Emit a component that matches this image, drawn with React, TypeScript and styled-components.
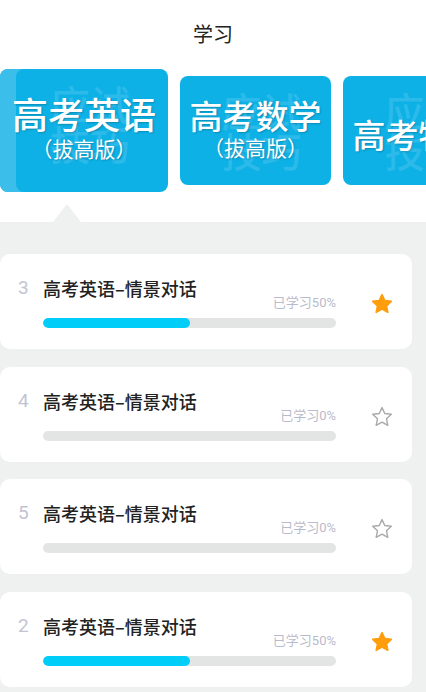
import React from 'react'
import styled, { createGlobalStyle } from 'styled-components'

const GlobalStyle = createGlobalStyle`
  html, body {
    margin: 0;
    padding: 0;
    background: #fff;
  }
  body {
    font-family: Roboto, "Noto Sans CJK SC", sans-serif;
  }
`

const Page = styled.div`
  width: 426px;
  min-height: 692px;
  background: #eff0f0;
  overflow: hidden;
`

const Top = styled.div`
  background: #fff;
`

const Header = styled.div`
  height: 66px;
  display: flex;
  align-items: center;
  justify-content: center;
  font-family: "Noto Sans CJK SC", sans-serif;
  font-size: 20px;
  font-weight: 400;
  color: #222;
`

const Tabs = styled.div`
  display: flex;
  align-items: center;
  gap: 12px;
  height: 123px;
  padding-top: 3px;
  overflow: hidden;
`

const Tab = styled.div<{ $active?: boolean; $sub?: boolean }>`
  position: relative;
  flex-shrink: 0;
  width: ${p => (p.$active ? '168px' : '151px')};
  height: ${p => (p.$active ? '123px' : '109px')};
  box-sizing: border-box;
  border-radius: 8px;
  background: #0db1e6;
  box-shadow: ${p => (p.$active ? 'inset 16px 0 0 #3cbeea' : 'none')};
  display: flex;
  flex-direction: column;
  align-items: center;
  justify-content: center;
  overflow: hidden;
  color: #fff;
  font-family: "Noto Sans CJK SC", sans-serif;
  padding-bottom: ${p => (p.$sub ? (p.$active ? '8px' : '5px') : '0')};
  padding-top: ${p => (p.$sub ? '0' : '7px')};
`

const Watermark = styled.div`
  position: absolute;
  top: 14px;
  left: calc(50% - 34px);
  width: 80px;
  font-size: 40px;
  line-height: 40px;
  color: rgba(255, 255, 255, 0.13);
  font-weight: 500;
`

const TabTitle = styled.div<{ $active?: boolean }>`
  position: relative;
  font-size: ${p => (p.$active ? '36px' : '33px')};
  line-height: ${p => (p.$active ? '40px' : '36px')};
  font-weight: 500;
  white-space: nowrap;
  text-shadow: 1px 1px 2px rgba(0, 0, 0, 0.22);
`

const TabSub = styled.div<{ $active?: boolean }>`
  position: relative;
  font-size: 21px;
  line-height: 24px;
  margin-top: ${p => (p.$active ? '3px' : '2px')};
  white-space: nowrap;
  text-shadow: 1px 1px 2px rgba(0, 0, 0, 0.22);
`

const PointerRow = styled.div`
  height: 30px;
  display: flex;
  align-items: flex-end;
  padding-left: 53px;
`

const Arrow = styled.div`
  width: 0;
  height: 0;
  border-left: 14px solid transparent;
  border-right: 14px solid transparent;
  border-bottom: 18px solid #eff0f0;
`

const List = styled.div`
  display: flex;
  flex-direction: column;
  gap: 17.6px;
  padding: 32px 14px 20px 0;
`

const Item = styled.div`
  height: 95px;
  background: #fff;
  border-radius: 10px;
  display: flex;
`

const Main = styled.div`
  width: 336px;
  padding-top: 24px;
  display: flex;
  flex-direction: column;
`

const TitleRow = styled.div`
  display: flex;
  align-items: center;
  height: 20px;
`

const Index = styled.div`
  width: 43px;
  box-sizing: border-box;
  padding-left: 18px;
  font-size: 19px;
  line-height: 20px;
  color: #c2c4d2;
`

const Title = styled.div`
  font-family: "Noto Sans CJK SC", sans-serif;
  font-size: 18px;
  line-height: 20px;
  font-weight: 500;
  color: #222;
`

const Meta = styled.div`
  margin-top: -2px;
  margin-left: 43px;
  font-size: 13px;
  line-height: 14px;
  color: #b9bbcc;
  text-align: right;
`

const Bar = styled.div`
  margin: 8px 0 0 43px;
  height: 10px;
  border-radius: 5px;
  background: #e3e4e4;
  overflow: hidden;
`

const Fill = styled.div`
  height: 100%;
  border-radius: 5px;
  background: #00cdf8;
`

const StarBox = styled.div`
  margin: 38px 0 0 34px;
  width: 24px;
  height: 24px;
`

const Star = ({ on }: { on: boolean }) => (
  <svg width="24" height="24" viewBox="0 0 24 24">
    <polygon
      points="12,2.6 14.8,8.5 21.3,9.3 16.5,13.8 17.8,20.3 12,17.1 6.2,20.3 7.5,13.8 2.7,9.3 9.2,8.5"
      fill={on ? '#ff9d0d' : 'none'}
      stroke={on ? '#ff9d0d' : '#a9a9a9'}
      strokeWidth={on ? 1.6 : 1.4}
      strokeLinejoin="round"
    />
  </svg>
)

const lessons = [
  { n: 3, p: 50, fav: true },
  { n: 4, p: 0, fav: false },
  { n: 5, p: 0, fav: false },
  { n: 2, p: 50, fav: true },
]

const App = () => {
  return (
    <Page>
      <GlobalStyle />
      <Top>
        <Header>学习</Header>
        <Tabs>
          <Tab $active $sub>
            <Watermark>应试技巧</Watermark>
            <TabTitle $active>高考英语</TabTitle>
            <TabSub $active>（拔高版）</TabSub>
          </Tab>
          <Tab $sub>
            <Watermark>应试技巧</Watermark>
            <TabTitle>高考数学</TabTitle>
            <TabSub>（拔高版）</TabSub>
          </Tab>
          <Tab>
            <Watermark>应试技巧</Watermark>
            <TabTitle>高考物理</TabTitle>
          </Tab>
        </Tabs>
        <PointerRow>
          <Arrow />
        </PointerRow>
      </Top>

      <List>
        {lessons.map((l, i) => (
          <Item key={i}>
            <Main>
              <TitleRow>
                <Index>{l.n}</Index>
                <Title>高考英语–情景对话</Title>
              </TitleRow>
              <Meta>已学习{l.p}%</Meta>
              <Bar>
                <Fill style={{ width: `${l.p}%` }} />
              </Bar>
            </Main>
            <StarBox>
              <Star on={l.fav} />
            </StarBox>
          </Item>
        ))}
      </List>
    </Page>
  )
}

export default App
